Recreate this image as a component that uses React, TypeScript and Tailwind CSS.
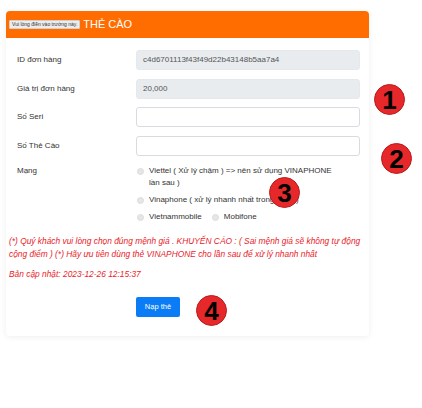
import React from "react";

const Badge = ({ n, cls }: { n: string; cls: string }) => (
  <div
    className={`absolute flex h-[31px] w-[31px] items-center justify-center rounded-full border border-[#b81d1d] bg-[#e6282b] text-[26px] font-bold leading-none text-black ${cls}`}
    style={{ fontFamily: '"Liberation Sans", Arial, sans-serif' }}
  >
    <span className="mt-[1px]">{n}</span>
  </div>
);

const Radio = ({ label }: { label: React.ReactNode }) => (
  <div className="flex items-start gap-[5px]">
    <span className="mt-[3px] h-[7px] w-[7px] shrink-0 rounded-full border border-[#dcdcdc] bg-[#e6e6e6]" />
    <span className="leading-[12px]">{label}</span>
  </div>
);

export default function App() {
  return (
    <div
      className="relative h-[408px] w-[422px] bg-white text-[#333]"
      style={{ fontFamily: '"Liberation Sans", Arial, sans-serif' }}
    >
      <div className="pl-[6px] pt-[11px]">
        <div className="w-[363px] overflow-hidden rounded-[4px] bg-white shadow-[0_1px_6px_rgba(0,0,0,0.07)]">
          <div className="flex h-[27px] items-center gap-[3px] bg-[#ff6d00] pl-[3px]">
            <span className="rounded-[1px] border border-[#cfcfcf] bg-[#ececec] px-[2px] text-[5px] leading-[7px] text-[#333]">
              Vui lòng điền vào trường này.
            </span>
            <span className="text-[11px] text-white">THẺ CÀO</span>
          </div>
          <div className="pb-[19px] pl-[3px] pr-[9px] pt-[12px] text-[8px]">
            <div className="flex flex-col gap-[8.5px]">
              {[
                ["ID đơn hàng", "c4d6701113f43f49d22b43148b5aa7a4", true],
                ["Giá trị đơn hàng", "20,000", true],
                ["Số Seri", "", false],
                ["Số Thẻ Cào", "", false],
              ].map(([l, v, d]) => (
                <div key={l as string} className="flex items-center">
                  <div className="w-[127px] pl-[8px]">{l}</div>
                  <div
                    className={`flex h-[20px] flex-1 items-center rounded-[3px] border px-[6px] ${
                      d ? "border-[#e6e8eb] bg-[#e9ecef] text-[#555]" : "border-[#d8dbe0] bg-white"
                    }`}
                  >
                    {v}
                  </div>
                </div>
              ))}
            </div>
            <div className="mt-[9px] flex">
              <div className="w-[127px] pl-[8px] leading-[12px]">Mạng</div>
              <div className="flex flex-col gap-[5px] pl-[1px]">
                <Radio
                  label={
                    <>
                      Viettel ( Xử lý chậm ) =&gt; nên sử dụng VINAPHONE
                      <br />
                      lần sau )
                    </>
                  }
                />
                <Radio label="Vinaphone ( xử lý nhanh nhất trong ngày )" />
                <div className="flex gap-[10px]">
                  <Radio label="Vietnammobile" />
                  <Radio label="Mobifone" />
                </div>
              </div>
            </div>
            <div className="mt-[12px] whitespace-nowrap text-[8.4px] italic leading-[13px] text-[#e8232a]">
              (*) Quý khách vui lòng chọn đúng mệnh giá . KHUYẾN CÁO : ( Sai mệnh giá sẽ không tự động
              <br />
              cộng điểm ) (*) Hãy ưu tiên dùng thẻ VINAPHONE cho lần sau để xử lý nhanh nhất
            </div>
            <div className="mt-[7px] text-[8.4px] italic leading-[13px] text-[#e8232a]">
              Bản cập nhật: 2023-12-26 12:15:37
            </div>
            <div className="mt-[16px] flex pl-[127px]">
              <button className="h-[20px] w-[44px] rounded-[2px] bg-[#0a7cf5] text-[7.5px] text-white">
                Nạp thẻ
              </button>
            </div>
          </div>
        </div>
      </div>
      <Badge n="1" cls="left-[374px] top-[84px]" />
      <Badge n="2" cls="left-[381px] top-[143px]" />
      <Badge n="3" cls="left-[269px] top-[177px]" />
      <Badge n="4" cls="left-[196px] top-[295px]" />
    </div>
  );
}
